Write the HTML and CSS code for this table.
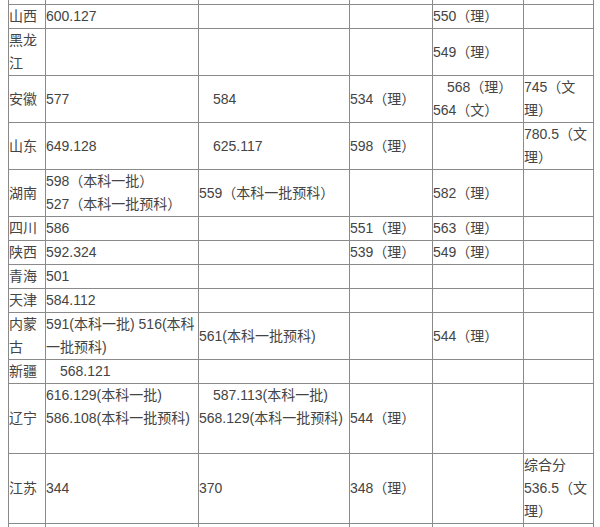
FILE: index.html
```html
<!DOCTYPE html>
<html lang="zh">
<head>
<meta charset="utf-8">
<title>分数线</title>
<link rel="stylesheet" href="styles.css">
</head>
<body>
<table class="scores">
  <colgroup>
    <col class="c1"><col class="c2"><col class="c3"><col class="c4"><col class="c5"><col class="c6">
  </colgroup>
  <tbody>
    <tr><td></td><td></td><td></td><td></td><td></td><td></td></tr>
    <tr><td>山西</td><td>600.127</td><td></td><td></td><td>550（理）</td><td></td></tr>
    <tr><td>黑龙江</td><td></td><td></td><td></td><td>549（理）</td><td></td></tr>
    <tr><td>安徽</td><td>577</td><td>　584</td><td>534（理）</td><td>　568（理）<br>564（文）</td><td>745（文理）</td></tr>
    <tr><td>山东</td><td>649.128</td><td>　625.117</td><td>598（理）</td><td></td><td>780.5（文理）</td></tr>
    <tr><td>湖南</td><td>598（本科一批）<br>527（本科一批预科）</td><td>559（本科一批预科）</td><td></td><td>582（理）</td><td></td></tr>
    <tr><td>四川</td><td>586</td><td></td><td>551（理）</td><td>563（理）</td><td></td></tr>
    <tr><td>陕西</td><td>592.324</td><td></td><td>539（理）</td><td>549（理）</td><td></td></tr>
    <tr><td>青海</td><td>501</td><td></td><td></td><td></td><td></td></tr>
    <tr><td>天津</td><td>584.112</td><td></td><td></td><td></td><td></td></tr>
    <tr><td>内蒙古</td><td>591(本科一批) 516(本科一批预科)</td><td>561(本科一批预科)</td><td></td><td>544（理）</td><td></td></tr>
    <tr><td>新疆</td><td>　568.121</td><td></td><td></td><td></td><td></td></tr>
    <tr><td>辽宁</td><td class="top">616.129(本科一批)<br>586.108(本科一批预科)</td><td class="top">　587.113(本科一批)<br>568.129(本科一批预科)</td><td>544（理）</td><td></td><td></td></tr>
    <tr><td>江苏</td><td>344</td><td>370</td><td>348（理）</td><td></td><td>综合分536.5（文理）</td></tr>
    <tr><td></td><td></td><td></td><td></td><td></td><td></td></tr>
  </tbody>
</table>
</body>
</html>
```
FILE: styles.css
```css
html, body {
  margin: 0;
  padding: 0;
  background: #ffffff;
}

.scores {
  margin: -20px 0 0 8px;
  width: 586px;
  table-layout: fixed;
  border-collapse: collapse;
  font-family: "Liberation Sans", "Noto Sans CJK SC", sans-serif;
  font-size: 14px;
  line-height: 23px;
  color: #444444;
}

.scores td {
  border: 1px solid #8a8a8a;
  padding: 0;
  vertical-align: middle;
  text-align: left;
  height: 23px;
}

.scores td.top {
  height: 69px;
  vertical-align: top;
}

.c1 { width: 37px; }
.c2 { width: 153px; }
.c3 { width: 151px; }
.c4 { width: 83px; }
.c5 { width: 91px; }
.c6 { width: 70px; }
```
